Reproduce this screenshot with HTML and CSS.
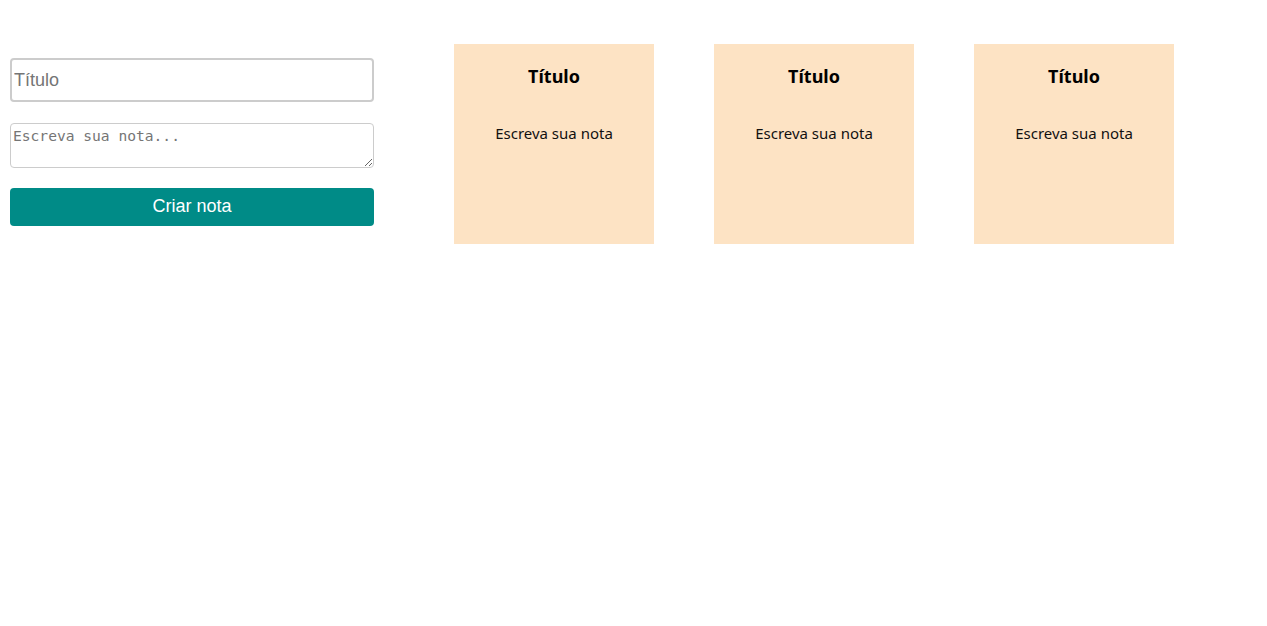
FILE: index.html
```html
<!DOCTYPE html>
<html lang="pt">
<head>
<meta charset="utf-8">
<title>Notas</title>
<link rel="stylesheet" href="styles.css">
</head>
<body>
<main class="app">
  <form class="note-form">
    <input class="title-input" type="text" placeholder="Título">
    <textarea class="note-input" placeholder="Escreva sua nota..."></textarea>
    <button class="create-btn" type="button">Criar nota</button>
  </form>
  <section class="notes">
    <article class="note">
      <h3 class="note-title">Título</h3>
      <p class="note-text">Escreva sua nota</p>
    </article>
    <article class="note">
      <h3 class="note-title">Título</h3>
      <p class="note-text">Escreva sua nota</p>
    </article>
    <article class="note">
      <h3 class="note-title">Título</h3>
      <p class="note-text">Escreva sua nota</p>
    </article>
  </section>
</main>
</body>
</html>
```

FILE: styles.css
```css
* { box-sizing: border-box; }
html, body { margin: 0; padding: 0; background: #fff; }
body { font-family: "Noto Sans", "Open Sans", sans-serif; }

.app {
  display: flex;
  align-items: flex-start;
  padding: 44px 10px 0 10px;
}

.note-form {
  width: 364px;
  display: flex;
  flex-direction: column;
  margin-top: 14px;
}

.title-input {
  height: 44px;
  border: 2px solid #cccccc;
  border-radius: 4px;
  padding: 0 2px;
  font-family: "Liberation Sans", Arial, sans-serif;
  font-size: 18px;
  color: #333;
  outline: none;
}
.title-input::placeholder { color: #757575; }

.note-input {
  margin-top: 21px;
  height: 45px;
  border: 1px solid #cccccc;
  border-radius: 4px;
  padding: 3px 2px 2px 2px;
  font-family: "DejaVu Sans Mono", "Liberation Mono", monospace;
  font-size: 14.6px;
  line-height: 18px;
  resize: vertical;
  outline: none;
}
.note-input::placeholder { color: #757575; }

.create-btn {
  margin-top: 20px;
  height: 38px;
  border: none;
  border-radius: 4px;
  background: #008b87;
  color: #fff;
  font-family: "Liberation Sans", Arial, sans-serif;
  font-size: 18px;
  padding: 0 0 2px 0;
  cursor: pointer;
}

.notes {
  display: flex;
  gap: 60px;
  margin-left: 80px;
}

.note {
  width: 200px;
  height: 200px;
  background: #fde3c4;
  text-align: center;
  padding-top: 20px;
}

.note-title {
  margin: 0;
  font-size: 18px;
  font-weight: 700;
  line-height: 24px;
  color: #000;
}

.note-text {
  margin: 35px 0 0 0;
  font-size: 15px;
  line-height: 20px;
  color: #111;
}
```
